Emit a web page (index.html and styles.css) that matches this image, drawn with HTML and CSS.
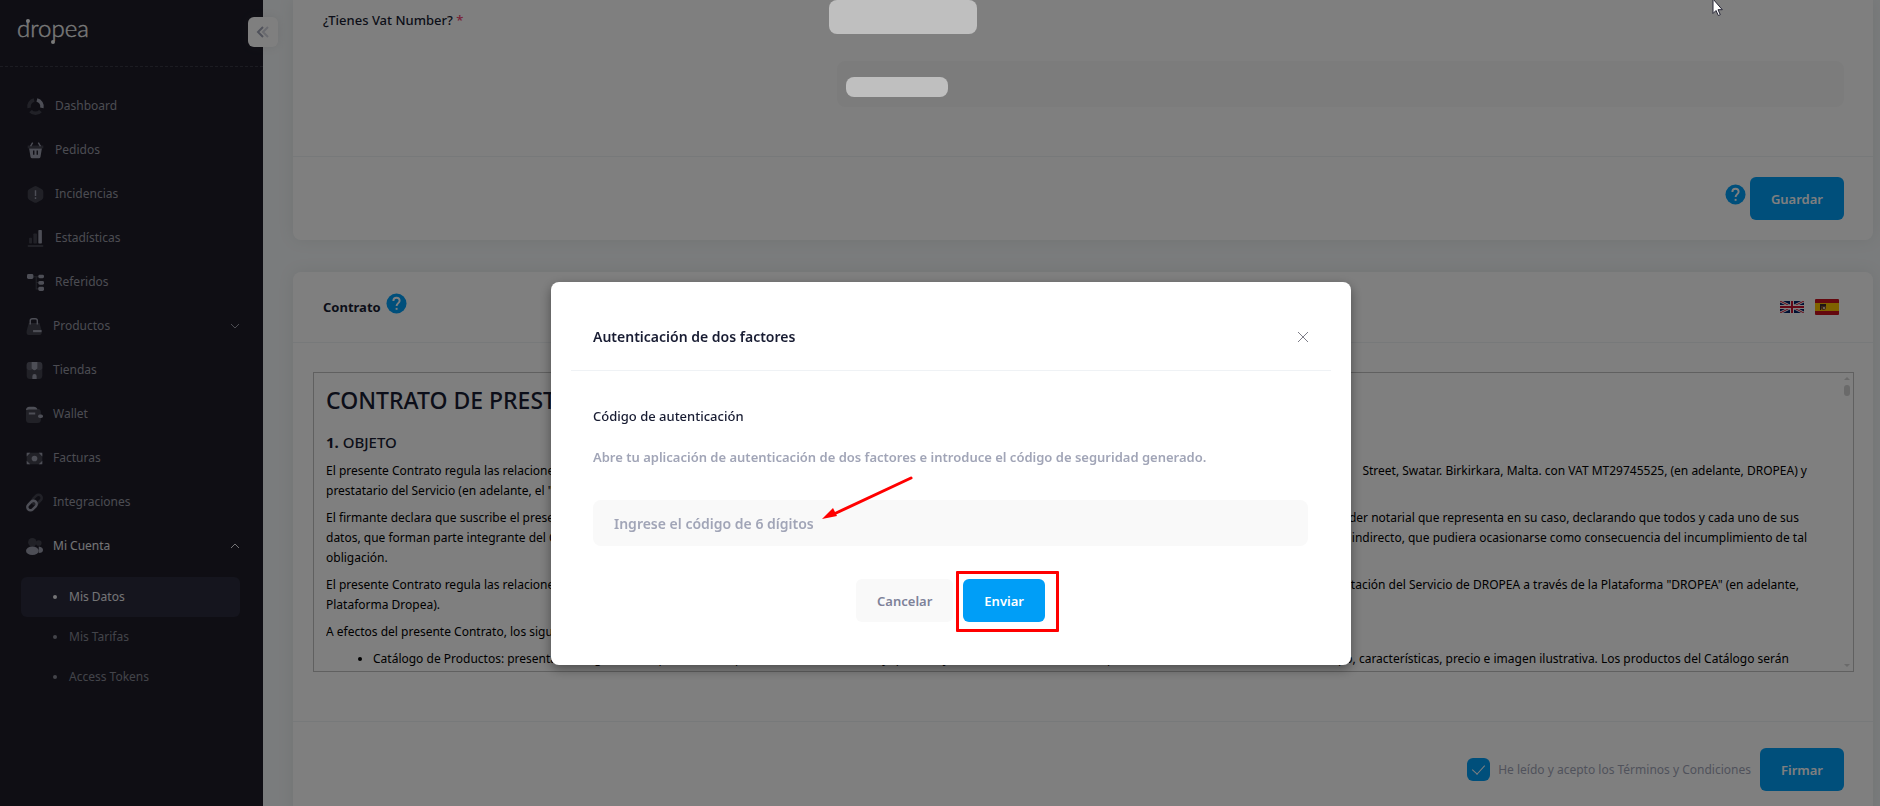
FILE: index.html
```html
<!DOCTYPE html>
<html lang="es">
<head>
<meta charset="utf-8">
<title>Dropea - Mis Datos</title>
<link rel="stylesheet" href="styles.css">
</head>
<body>
<div class="app">
  <aside class="sidebar">
    <div class="brand">
      <svg class="logo" width="76" height="30" viewBox="0 0 76 30" role="img" aria-label="dropea">
        <text class="logo-text" x="0" y="21">dropea</text>
        <circle cx="11" cy="5" r="2"/><circle cx="36" cy="26" r="2"/>
      </svg>
      <button class="toggle" type="button" aria-label="Contraer menú">
        <svg width="14" height="14" viewBox="0 0 14 14"><path class="chev-a" d="M7 2 2 7l5 5"/><path class="chev-b" d="M12 2 7 7l5 5"/></svg>
      </button>
    </div>
    <nav class="menu">
      <a class="item" href="#"><svg class="icon" viewBox="0 0 24 24"><g fill="none" stroke-width="5"><path class="ln-lo" d="M10 2.8A9.4 9.4 0 0 0 3 14"/><path class="ln-lo" d="M5 18.5a9.4 9.4 0 0 0 14 0"/><path class="ln-hi" d="M14 2.8A9.4 9.4 0 0 1 21 14"/></g></svg>Dashboard</a>
      <a class="item" href="#"><svg class="icon" viewBox="0 0 24 24"><path class="lo" d="M1 5h22v4H1z"/><path class="ln-hi" d="M8 1 5 6M16 1l3 5" stroke-width="2" fill="none"/><path class="hi" fill-rule="evenodd" d="M3 9h18l-2 12q-.4 2-2.400 2H7.400Q5.400 23 5 21zM8.500 12v6h2v-6zM13.500 12v6h2v-6z"/></svg>Pedidos</a>
      <a class="item" href="#"><svg class="icon" viewBox="0 0 24 24"><path class="lo" d="M12 0q1 0 2 .6l7 4Q23 6 23 8v8q0 2-2 3.300l-7 4q-2 1-4 0l-7-4Q1 18 1 16V8q0-2 2-3.400l7-4Q11 0 12 0z"/><path class="hi" d="M11 6h2v8h-2zM11 16h2v2.500h-2z"/></svg>Incidencias</a>
      <a class="item" href="#"><svg class="icon" viewBox="0 0 24 24"><rect class="lo" x="1" y="21" width="22" height="3" rx="1"/><rect class="lo" x="3" y="11" width="4" height="8" rx="1"/><rect class="lo" x="9" y="5" width="5" height="14" rx="1"/><rect class="hi" x="16" y="0" width="5" height="19" rx="1"/></svg>Estadísticas</a>
      <a class="item" href="#"><svg class="icon" viewBox="0 0 24 24"><path class="ln-lo" fill="none" stroke-width="1.500" d="M8 4h10M13 4v17h5M13 12h5"/><rect class="hi" x="0" y="0" width="9" height="7" rx="2"/><rect class="hi" x="16" y="1" width="8" height="5" rx="2"/><rect class="hi" x="16" y="10" width="8" height="5" rx="2"/><rect class="hi" x="16" y="18" width="8" height="6" rx="2"/></svg>Referidos</a>
      <a class="item item-near" href="#"><svg class="icon" viewBox="0 0 24 24"><path class="lo" d="M4 7h15l3 11q1 6-3 6H4q-4 0-3-6z"/><path class="ln-hi" fill="none" stroke-width="2" d="M6 9V4q0-3 3-3h4q3 0 3 3v5"/><path class="hi" d="M10 17h12v3H10z"/></svg>Productos<svg class="caret" viewBox="0 0 10 10"><path d="m1 3 4 4 4-4"/></svg></a>
      <a class="item item-near" href="#"><svg class="icon" viewBox="0 0 24 24"><rect class="lo" x="1" y="0" width="22" height="24" rx="5"/><path class="lo2" d="M5 0h14q4 0 4 4v5q-4 5-8 1H9Q5 14 1 9V4q0-4 4-4z"/><path class="hi" d="M8 0h8v9q-4 5-8 0zM9 24v-4q0-3 3-3t3 3v4z"/></svg>Tiendas</a>
      <a class="item item-near" href="#"><svg class="icon" viewBox="0 0 24 24"><rect class="lo" x="0" y="4" width="21" height="20" rx="5"/><path class="hi" d="M0 6q0-5 5-5h6q4 0 5 4H4zM4 9h9v3H4z"/><rect class="hi" x="17" y="12" width="7" height="5" rx="2.500"/></svg>Wallet</a>
      <a class="item item-near" href="#"><svg class="icon" viewBox="0 0 24 24"><rect class="lo" x="1" y="4" width="22" height="16" rx="2"/><circle class="hi" cx="12" cy="12" r="4"/><path class="hi" d="M1 4h5L1 9zM23 4v5l-5-5zM1 20v-5l5 5zM23 20h-5l5-5z"/></svg>Facturas</a>
      <a class="item item-near" href="#"><svg class="icon" viewBox="0 0 24 24"><g transform="rotate(-45 12 12)" fill="none" stroke-width="3.500"><rect class="ln-lo" x="10" y="7" width="15" height="9" rx="4.500"/><rect class="ln-hi" x="-1" y="8" width="15" height="9" rx="4.500"/></g></svg>Integraciones</a>
      <a class="item item-near item-open" href="#"><svg class="icon" viewBox="0 0 24 24"><circle class="lo" cx="18" cy="7" r="4"/><circle class="lo" cx="9" cy="6" r="6"/><path class="hi" d="M18 12q6 1 6 5t-6 4z"/><ellipse class="hi" cx="9" cy="18" rx="9" ry="6"/></svg>Mi Cuenta<svg class="caret" viewBox="0 0 10 10"><path d="m1 7 4-4 4 4"/></svg></a>
      <div class="submenu">
        <a class="sub sub-active" href="#">Mis Datos</a>
        <a class="sub" href="#">Mis Tarifas</a>
        <a class="sub" href="#">Access Tokens</a>
      </div>
    </nav>
  </aside>

  <main class="content">
    <section class="card card-vat">
      <div class="vat-body">
        <label class="field-label" for="vat">¿Tienes Vat Number? <span class="required">*</span></label>
        <input class="field vat-field" id="vat" type="text" disabled>
      </div>
      <div class="card-footer">
        <svg class="help" viewBox="0 0 22 22" role="img" aria-label="Ayuda"><circle cx="11" cy="11" r="10.500"/><path d="M7.700 8.300Q7.800 5 11 5t3.300 3.100c0 2.400-3.200 2.700-3.200 5.600"/><path d="M11.100 15.600v2"/></svg>
        <button class="btn btn-primary" type="button">Guardar</button>
      </div>
    </section>

    <section class="card">
      <header class="card-header">
        <h3 class="card-title">Contrato</h3>
        <svg class="help" viewBox="0 0 22 22" role="img" aria-label="Ayuda"><circle cx="11" cy="11" r="10.500"/><path d="M7.700 8.300Q7.800 5 11 5t3.300 3.100c0 2.400-3.200 2.700-3.200 5.600"/><path d="M11.100 15.600v2"/></svg>
        <div class="flags">
          <svg width="24" height="12" viewBox="0 0 24 12" role="img" aria-label="English"><path fill="#012169" d="M0 0h24v12H0z"/><path stroke="#fff" stroke-width="2.600" d="m0 0 24 12M24 0 0 12"/><path stroke="#c8102e" stroke-width="1" d="m0 0 24 12M24 0 0 12"/><path stroke="#fff" stroke-width="4" d="M12 0v12M0 6h24"/><path stroke="#c8102e" stroke-width="2" d="M12 0v12M0 6h24"/></svg>
          <svg width="24" height="16" viewBox="0 0 24 16" role="img" aria-label="Español"><rect width="24" height="16" rx="1" fill="#c8101c"/><path fill="#ffc400" d="M0 4h24v8H0z"/><path fill="#7a4a2a" d="M6 6h5v3q0 2-2.500 2T6 9z"/><path fill="#3a2a2a" d="M5 5h6v2H5zM5 7h1v4H5z"/><path fill="#d8c8b0" d="M8 8h2v2H8z"/></svg>
        </div>
      </header>
      <div class="contract">
        <div class="contract-text">
          <h1 class="contract-title">CONTRATO DE PRESTACIÓN DE SERVICIOS</h1>
          <h2 class="contract-section"><strong>1.</strong> OBJETO</h2>
          <p class="clause">
            <span class="line"><span class="start">El presente Contrato regula las relaciones entre las partes, la sociedad DROPEA LTD, con domicilio social en</span><span class="end">Street, Swatar. Birkirkara, Malta. con VAT MT29745525, (en adelante, DROPEA) y</span></span>
            <span class="line"><span class="start">prestatario del Servicio (en adelante, el "Cliente").</span></span>
          </p>
          <p class="clause">
            <span class="line line-mid"><span class="start">El firmante declara que suscribe el presente Contrato en nombre propio o en virtud del</span><span class="end">poder notarial que representa en su caso, declarando que todos y cada uno de sus</span></span>
            <span class="line"><span class="start">datos, que forman parte integrante del Contrato, son ciertos, y responde de todo daño</span><span class="end">indirecto, que pudiera ocasionarse como consecuencia del incumplimiento de tal</span></span>
            <span class="line"><span class="start">obligación.</span></span>
          </p>
          <p class="clause">
            <span class="line line-mid"><span class="start">El presente Contrato regula las relaciones entre las partes con motivo de la</span><span class="end">prestación del Servicio de DROPEA a través de la Plataforma "DROPEA" (en adelante,</span></span>
            <span class="line"><span class="start">Plataforma Dropea).</span></span>
          </p>
          <p class="clause"><span class="line"><span class="start">A efectos del presente Contrato, los siguientes términos tendrán este significado:</span></span></p>
          <ul class="terms">
            <li><span class="line line-short"><span class="start">Catálogo de Productos: presentación digital de los productos disponibles en la Plataforma y que incluye nombre, referencia, descripción,</span><span class="end">tipo, características, precio e imagen ilustrativa. Los productos del Catálogo serán</span></span></li>
          </ul>
        </div>
        <div class="scrollbar" aria-hidden="true">
          <span class="arrow-up"></span><span class="thumb"></span><span class="arrow-down"></span>
        </div>
      </div>
      <div class="card-footer card-footer-tall">
        <label class="accept"><input class="check" type="checkbox" checked>He leído y acepto los Términos y Condiciones</label>
        <button class="btn btn-primary" type="button">Firmar</button>
      </div>
    </section>
  </main>
</div>

<div class="backdrop">
  <div class="modal" role="dialog" aria-modal="true" aria-labelledby="modal-title">
    <header class="modal-header">
      <h2 class="modal-title" id="modal-title">Autenticación de dos factores</h2>
      <button class="close" type="button" aria-label="Cerrar"><svg width="10" height="10" viewBox="0 0 10 10"><path d="m0 0 10 10M10 0 0 10"/></svg></button>
    </header>
    <form class="modal-body">
      <label class="modal-label" for="code">Código de autenticación</label>
      <p class="modal-hint">Abre tu aplicación de autenticación de dos factores e introduce el código de seguridad generado.</p>
      <input class="field code-field" id="code" type="text" placeholder="Ingrese el código de 6 dígitos">
      <div class="modal-actions">
        <button class="btn btn-light" type="button">Cancelar</button>
        <span class="marked"><button class="btn btn-primary" type="button">Enviar</button></span>
      </div>
    </form>
    <svg class="pointer-arrow" width="92" height="44" viewBox="0 0 92 44"><path d="M89 2 12 38" stroke="#f00" stroke-width="3" stroke-linecap="round"/><path d="m0 43 11-11 4 8z" fill="#f00"/></svg>
  </div>
</div>
<span class="redaction redaction-large"></span>
<span class="redaction redaction-small"></span>
<svg class="cursor" width="12" height="18" viewBox="0 0 12 18"><path d="M1-1v14.500l3-3 2.300 5 2-.8-2.300-5h4.300z" fill="#fff" stroke="#223" stroke-width="1"/></svg>
</body>
</html>
```
FILE: styles.css
```css
* { box-sizing: border-box; }
body {
  margin: 0;
  background: #f5f8fa;
  color: #181c32;
  font: 12px/20px "Noto Sans", "Open Sans", sans-serif;
}
h1, h2, h3, p, ul { margin: 0; padding: 0; }
button, input { font: inherit; }
a { color: inherit; text-decoration: none; }

.app { display: flex; height: 100vh; overflow: hidden; }

/* Sidebar */
.sidebar { flex: 0 0 263px; background: #1e1d29; color: #9899a4; }
.brand {
  position: relative;
  height: 67px;
  padding: 16px 17px;
  border-bottom: 1px dashed #393945;
}
.logo { display: block; fill: #f4f4f4; }
.logo-text { font: 300 24px Lato, sans-serif; fill: #f4f4f4; stroke: #f4f4f4; stroke-width: .4px; }
.toggle {
  position: absolute;
  top: 17px;
  right: -15px;
  display: grid;
  place-items: center;
  width: 30px;
  height: 30px;
  padding: 0;
  border: 0;
  border-radius: 6px;
  background: #fff;
  box-shadow: 0 0 10px rgba(100, 110, 100, .12);
}
.toggle path { fill: none; stroke-width: 2; }
.chev-a { stroke: #a1a5b7; }
.chev-b { stroke: #d3d5de; }

.menu { padding: 17px 23px 0 21px; }
.item {
  display: flex;
  align-items: center;
  gap: 11px;
  height: 44px;
  padding-left: 6px;
}
.item-near { padding-left: 5px; gap: 10px; }
.item-open { color: #e8e8ec; }
.icon { width: 17px; height: 17px; overflow: visible; }
.lo { fill: #43434f; }
.lo2 { fill: #5a5a68; }
.hi { fill: #9b9cac; }
.ln-lo { stroke: #43434f; }
.ln-hi { stroke: #9b9cac; }
.caret { width: 10px; height: 10px; margin-left: auto; fill: none; stroke: currentColor; stroke-width: 1; }
.submenu { padding-top: 9px; }
.sub {
  display: flex;
  align-items: center;
  gap: 12px;
  height: 40px;
  padding-left: 32px;
  border-radius: 6px;
  color: #878894;
}
.sub::before { content: ""; width: 4px; height: 4px; border-radius: 50%; background: currentColor; }
.sub-active { background: #2a2a3c; color: #e8e8ec; }

/* Cards */
.content { flex: 1; min-width: 0; padding: 0 7px 0 30px; }
.card {
  margin-bottom: 32px;
  border-radius: 8px;
  background: #fff;
  box-shadow: 0 0 16px rgba(76, 87, 70, .1);
}
.card-vat { border-radius: 0 0 8px 8px; }
.vat-body {
  display: grid;
  grid-template-columns: 514px 1fr;
  align-items: start;
  height: 156px;
  padding: 10px 29px 0 30px;
}
.field-label { font-size: 13px; font-weight: 500; }
.required { color: #f1416c; }
.field {
  width: 100%;
  height: 46px;
  border: 0;
  border-radius: 8px;
  background: #f9f9f9;
  padding: 0 21px;
}
.vat-field { margin-top: 51px; }
.card-footer {
  display: flex;
  align-items: center;
  justify-content: flex-end;
  gap: 4px;
  padding: 20px 29px;
  border-top: 1px solid #eff2f5;
}
.card-footer-tall { padding-top: 26px; padding-bottom: 26px; }
.btn {
  height: 43px;
  padding: 0 21px;
  border: 0;
  border-radius: 6px;
  font-size: 13px;
  font-weight: 600;
}
.btn-primary { background: #009ef7; color: #fff; }
.btn-light { background: #f9f9f9; color: #7e8299; }
.help { flex: none; width: 21px; height: 21px; margin-bottom: 8px; fill: #009ef7; }
.help path { fill: none; stroke: #fff; stroke-width: 2; }
.card-header {
  display: flex;
  align-items: center;
  gap: 5px;
  height: 71px;
  padding: 0 34px 0 30px;
  border-bottom: 1px solid #eff2f5;
}
.card-title { font-size: 13px; font-weight: 700; }
.flags { display: flex; align-items: center; gap: 11px; margin-left: auto; }

/* Contract */
.contract {
  display: flex;
  height: 300px;
  margin: 29px 19px 49px 20px;
  border: 1px solid #c0c0c0;
  overflow: hidden;
  color: #000;
}
.contract-text { flex: 1; min-width: 0; padding: 11px 34px 0 12px; }
.contract-title { color: #181c32; font-size: 23px; font-weight: 500; line-height: 32px; white-space: nowrap; }
.contract-section { margin: 14px 0 7px; color: #181c32; font-size: 15px; font-weight: 500; line-height: 24px; }
.clause { margin-bottom: 7px; }
.line { display: flex; }
.line-mid { padding-right: 8px; }
.line-short { padding-right: 18px; }
.start { flex: 1; min-width: 0; overflow: hidden; white-space: nowrap; }
.end { flex: none; padding-left: 4px; white-space: nowrap; }
.terms { padding-left: 47px; }
.scrollbar { display: flex; flex-direction: column; align-items: center; width: 12px; padding: 4px 0; }
.arrow-up { border: 3px solid transparent; border-top: 0; border-bottom-color: #d4d4d4; }
.thumb { width: 6px; height: 11px; margin-top: 5px; border-radius: 3px; background: #d4d4d4; }
.arrow-down { margin-top: auto; border: 3px solid transparent; border-bottom: 0; border-top-color: #d4d4d4; }

.accept { display: flex; align-items: center; gap: 8px; margin-right: 5px; color: #a1a5b7; }
.check {
  appearance: none;
  width: 23px;
  height: 23px;
  margin: 0;
  border-radius: 6px;
  background: #009ef7;
  display: grid;
  place-items: center;
}
.check::after {
  content: "";
  width: 6px;
  height: 11px;
  margin-bottom: 3px;
  border: solid #fff;
  border-width: 0 1px 1px 0;
  transform: rotate(42deg);
}

/* Modal */
.backdrop {
  position: fixed;
  inset: 0;
  padding: 282px 0 0 22px;
  background: rgba(0, 0, 0, .5);
}
.modal {
  position: relative;
  width: 800px;
  max-width: 100%;
  margin: 0 auto;
  padding: 0 20px 43px;
  border-radius: 8px;
  background: #fff;
  box-shadow: 0 4px 12px rgba(0, 0, 0, .4);
}
.modal-header {
  display: flex;
  align-items: center;
  justify-content: space-between;
  height: 89px;
  padding: 21px 17px 0 22px;
  border-bottom: 1px solid #eff2f5;
}
.modal-title { font-size: 14px; font-weight: 600; }
.close { padding: 6px; border: 0; background: none; line-height: 0; }
.close path { stroke: #7e7e88; stroke-width: 1; }
.modal-body { padding: 35px 23px 0 22px; }
.modal-label { display: block; font-size: 13px; font-weight: 500; }
.modal-hint { margin: 21px 0 33px; color: #a1a5b7; font-size: 13px; font-weight: 600; }
.code-field { font-size: 14px; font-weight: 600; }
.code-field::placeholder { color: #a1a5b7; opacity: 1; }
.modal-actions { display: flex; justify-content: center; gap: 10px; padding-top: 33px; }
.marked { position: relative; }
.marked::after {
  content: "";
  position: absolute;
  inset: -8px -14px -10px -7px;
  border: 3px solid #f00;
  border-radius: 1px;
}
.pointer-arrow { position: absolute; left: 271px; top: 194px; }

/* Marks over the page */
.redaction { position: fixed; border-radius: 8px; background: #bfbfbf; }
.redaction-large { left: 829px; top: 0; width: 148px; height: 34px; }
.redaction-small { left: 846px; top: 77px; width: 102px; height: 20px; }
.cursor { position: fixed; left: 1712px; top: 0; }
```
